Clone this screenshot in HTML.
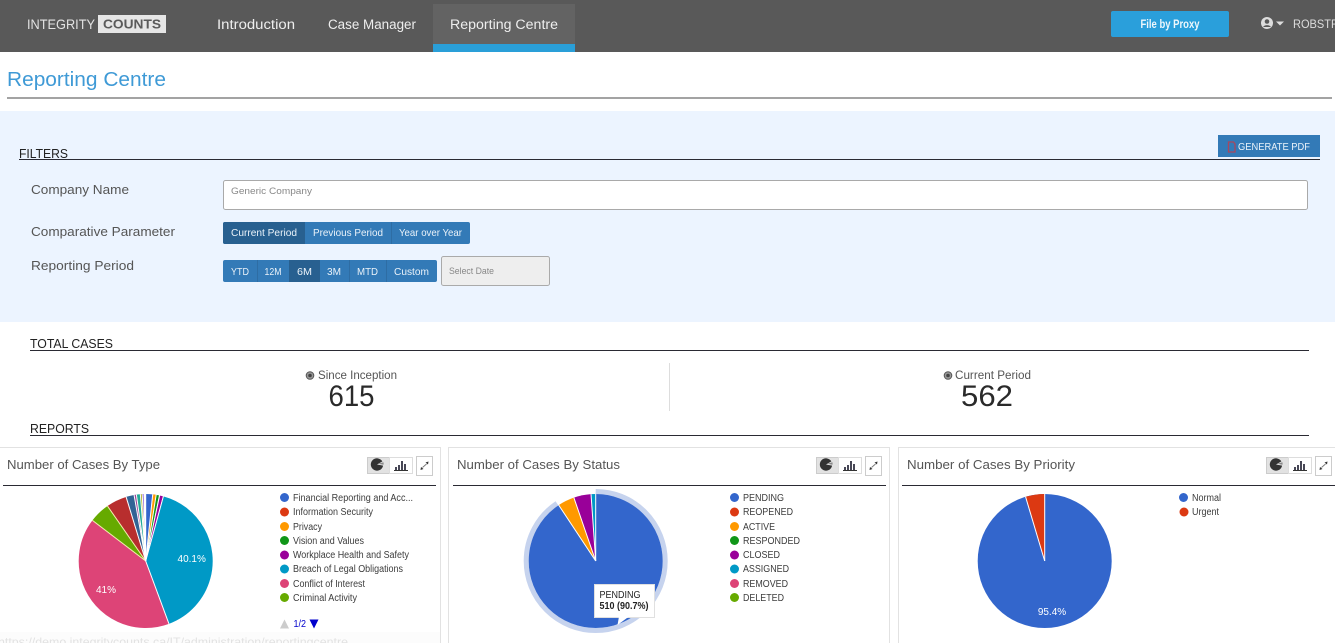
<!DOCTYPE html>
<html lang="en"><head><meta charset="utf-8"><title>Reporting Centre</title>
<style>
html,body{margin:0;padding:0;background:#fff;width:1335px;height:643px;overflow:hidden}
svg{display:block}
text{font-family:"Liberation Sans",Arial,sans-serif;white-space:pre}
.lg{font-size:10px;fill:#3c3c3c}
.ct{font-size:13px;fill:#555}
.sec{font-size:12.5px;fill:#222}
.lab{font-size:12.5px;fill:#555}
.btn{font-size:10.5px;fill:#eaf2f9}
.nav{font-size:13.5px;fill:#eee}
.pl{font-size:10px;fill:#fff;text-anchor:middle}
</style></head><body>
<svg xmlns="http://www.w3.org/2000/svg" width="1335" height="643" viewBox="0 0 1335 643">
<defs>
<g id="tools">
  <rect x=".5" y=".5" width="22" height="16" fill="#e2e2e2" stroke="#ccc"/>
  <rect x="22.5" y=".5" width="23" height="16" fill="#fff" stroke="#ddd"/>
  <rect x="49.5" y="-.5" width="16" height="19" fill="#fff" stroke="#ccc"/>
  <path d="M10 7.500L16.100 8.580A6.200 6.200 0 1 1 15.370 4.400Z" fill="#333"/>
  <path d="M11.500 6.800L16.400 5.200A5.500 5.500 0 0 1 16.500 7.800Z" fill="#888"/>
  <path d="M27 13.500H41" stroke="#333" stroke-width="1"/>
  <path d="M29 13V10M32 13V8M35 13V4M38 13V7" stroke="#334" stroke-width="1.800"/>
  <path d="M55.500 10.500L59.500 7" stroke="#777" stroke-width=".9"/>
  <path d="M53.500 13L54 10L56.500 12ZM61.500 4.500L61 7.500L58.500 5.500Z" fill="#333"/>
</g>
</defs>

<!-- top bar -->
<rect width="1335" height="52" fill="#595959"/>
<rect x="433" y="4" width="142" height="40" fill="#636363"/>
<rect x="433" y="44" width="142" height="8" fill="#2a9fd8"/>
<text x="27" y="29" font-size="14" fill="#e2e2e2" textLength="68" lengthAdjust="spacingAndGlyphs">INTEGRITY</text>
<rect x="98" y="15" width="68" height="18" fill="#e6e6e6"/>
<text x="103" y="28.500" font-size="12.500" font-weight="700" fill="#5a5a5a" textLength="58" lengthAdjust="spacingAndGlyphs">COUNTS</text>
<text class="nav" x="217" y="29" textLength="78" lengthAdjust="spacingAndGlyphs">Introduction</text>
<text class="nav" x="328" y="29" textLength="88" lengthAdjust="spacingAndGlyphs">Case Manager</text>
<text class="nav" x="450" y="29" textLength="108" lengthAdjust="spacingAndGlyphs">Reporting Centre</text>
<rect x="1111" y="11" width="118" height="26" rx="2" fill="#2a9fdb"/>
<text x="1140.500" y="28" font-size="11.500" font-weight="700" fill="#eef7fc" textLength="59" lengthAdjust="spacingAndGlyphs">File by Proxy</text>
<circle cx="1267" cy="23" r="6" fill="#ddd"/>
<circle cx="1267" cy="21.500" r="2.300" fill="#595959"/>
<path d="M1263 27a4.500 3.500 0 0 1 8 0Z" fill="#595959"/>
<path d="M1276 21.500h8l-4 4Z" fill="#ddd"/>
<text x="1293" y="28" font-size="11.500" fill="#ddd" textLength="46" lengthAdjust="spacingAndGlyphs">ROBSTR</text>

<!-- title -->
<text x="7" y="86" font-size="20" fill="#3f9ad6" textLength="159" lengthAdjust="spacingAndGlyphs">Reporting Centre</text>
<rect x="7" y="97" width="1325" height="2" fill="#a3a3a3"/>

<!-- filter panel -->
<rect y="111" width="1335" height="211" fill="#ecf4ff"/>
<text class="sec" x="19" y="158" textLength="49" lengthAdjust="spacingAndGlyphs">FILTERS</text>
<rect x="19" y="159" width="1301" height="1" fill="#2a2a33"/>
<rect x="1218" y="135" width="102" height="22" fill="#337ab7"/>
<path d="M1228.500 142h5l1.500 2v8h-6.500Z" fill="none" stroke="#a8475f" stroke-width="1.300"/>
<text x="1238" y="150" font-size="10.500" fill="#e9f2fa" textLength="72" lengthAdjust="spacingAndGlyphs">GENERATE PDF</text>

<text class="lab" x="31" y="194" textLength="98" lengthAdjust="spacingAndGlyphs">Company Name</text>
<text class="lab" x="31" y="236" textLength="144" lengthAdjust="spacingAndGlyphs">Comparative Parameter</text>
<text class="lab" x="31" y="270" textLength="103" lengthAdjust="spacingAndGlyphs">Reporting Period</text>

<rect x="223.500" y="180.500" width="1084" height="29" rx="2" fill="#fff" stroke="#a9a9a9"/>
<text x="231" y="194" font-size="9.500" fill="#888" textLength="81" lengthAdjust="spacingAndGlyphs">Generic Company</text>

<rect x="223" y="222" width="247" height="22" rx="2" fill="#337ab7"/>
<path d="M225 222h80v22h-80a2 2 0 0 1-2-2v-18a2 2 0 0 1 2-2Z" fill="#286090"/>
<rect x="391" y="222" width="1" height="22" fill="#2e6da4"/>
<text class="btn" x="231" y="236" textLength="66" lengthAdjust="spacingAndGlyphs">Current Period</text>
<text class="btn" x="313" y="236" textLength="70" lengthAdjust="spacingAndGlyphs">Previous Period</text>
<text class="btn" x="399" y="236" textLength="63" lengthAdjust="spacingAndGlyphs">Year over Year</text>

<rect x="223" y="260" width="214" height="22" rx="2" fill="#337ab7"/>
<rect x="289" y="260" width="31" height="22" fill="#286090"/>
<rect x="257" y="260" width="1" height="22" fill="#2e6da4"/>
<rect x="349" y="260" width="1" height="22" fill="#2e6da4"/>
<rect x="386" y="260" width="1" height="22" fill="#2e6da4"/>
<text class="btn" x="231" y="275" textLength="18" lengthAdjust="spacingAndGlyphs">YTD</text>
<text class="btn" x="264.500" y="275" textLength="17" lengthAdjust="spacingAndGlyphs">12M</text>
<text class="btn" x="297" y="275" textLength="15" lengthAdjust="spacingAndGlyphs">6M</text>
<text class="btn" x="327" y="275" textLength="14" lengthAdjust="spacingAndGlyphs">3M</text>
<text class="btn" x="357" y="275" textLength="21" lengthAdjust="spacingAndGlyphs">MTD</text>
<text class="btn" x="394" y="275" textLength="35" lengthAdjust="spacingAndGlyphs">Custom</text>
<rect x="441.500" y="256.500" width="108" height="29" rx="2" fill="#eee" stroke="#aaa"/>
<text x="449" y="274" font-size="9" fill="#888" textLength="45" lengthAdjust="spacingAndGlyphs">Select Date</text>

<!-- totals -->
<text class="sec" x="30" y="348" textLength="83" lengthAdjust="spacingAndGlyphs">TOTAL CASES</text>
<rect x="30" y="350" width="1279" height="1" fill="#2a2a33"/>
<circle cx="310" cy="375.500" r="3.800" fill="#999" stroke="#555"/><circle cx="310" cy="375.500" r="1.800" fill="#444"/>
<text x="318" y="379" font-size="11.500" fill="#555" textLength="79" lengthAdjust="spacingAndGlyphs">Since Inception</text>
<text x="328.500" y="406" font-size="30" fill="#2a2a2a" textLength="46" lengthAdjust="spacingAndGlyphs">615</text>
<rect x="669" y="363" width="1" height="48" fill="#ddd"/>
<circle cx="948" cy="375.500" r="3.800" fill="#999" stroke="#555"/><circle cx="948" cy="375.500" r="1.800" fill="#444"/>
<text x="955" y="379" font-size="11.500" fill="#555" textLength="76" lengthAdjust="spacingAndGlyphs">Current Period</text>
<text x="961" y="406" font-size="30" fill="#2a2a2a" textLength="52" lengthAdjust="spacingAndGlyphs">562</text>
<text class="sec" x="30" y="433" textLength="59" lengthAdjust="spacingAndGlyphs">REPORTS</text>
<rect x="30" y="435" width="1279" height="1" fill="#2a2a33"/>

<!-- cards -->
<g fill="#fff" stroke="#e2e2e2">
  <rect x="-2.500" y="447.500" width="443" height="210"/>
  <rect x="448.500" y="447.500" width="441" height="210"/>
  <rect x="898.500" y="447.500" width="441" height="210"/>
</g>
<text class="ct" x="7" y="469" textLength="153" lengthAdjust="spacingAndGlyphs">Number of Cases By Type</text>
<text class="ct" x="457" y="469" textLength="163" lengthAdjust="spacingAndGlyphs">Number of Cases By Status</text>
<text class="ct" x="907" y="469" textLength="168" lengthAdjust="spacingAndGlyphs">Number of Cases By Priority</text>
<rect x="3" y="485" width="433" height="1" fill="#2a2a33"/>
<rect x="453" y="485" width="433" height="1" fill="#2a2a33"/>
<rect x="902" y="485" width="433" height="1" fill="#2a2a33"/>
<use href="#tools" x="367" y="457"/>
<use href="#tools" x="816" y="457"/>
<use href="#tools" x="1266" y="457"/>

<!-- pie 1 -->
<g transform="translate(145.700 561)" fill="none" stroke-width="67">
  <circle r="33.500" pathLength="360" stroke="#3366cc" stroke-dasharray="6 360" transform="rotate(-90)"/>
  <circle r="33.500" pathLength="360" stroke="#dc3912" stroke-dasharray=".5 360" transform="rotate(-84)"/>
  <circle r="33.500" pathLength="360" stroke="#ff9900" stroke-dasharray="2.500 360" transform="rotate(-83.500)"/>
  <circle r="33.500" pathLength="360" stroke="#109618" stroke-dasharray="2.500 360" transform="rotate(-81)"/>
  <circle r="33.500" pathLength="360" stroke="#990099" stroke-dasharray="3 360" transform="rotate(-78)"/>
  <circle r="33.500" pathLength="360" stroke="#0099c6" stroke-dasharray="144.400 360" transform="rotate(-74.700)"/>
  <circle r="33.500" pathLength="360" stroke="#dd4477" stroke-dasharray="147.600 360" transform="rotate(69.700)"/>
  <circle r="33.500" pathLength="360" stroke="#66aa00" stroke-dasharray="18 360" transform="rotate(217.300)"/>
  <circle r="33.500" pathLength="360" stroke="#b82e2e" stroke-dasharray="17.800 360" transform="rotate(235.200)"/>
  <circle r="33.500" pathLength="360" stroke="#316395" stroke-dasharray="7 360" transform="rotate(253)"/>
  <circle r="33.500" pathLength="360" stroke="#994499" stroke-dasharray="2 360" transform="rotate(260)"/>
  <circle r="33.500" pathLength="360" stroke="#22aa99" stroke-dasharray="3.400 360" transform="rotate(262)"/>
  <circle r="33.500" pathLength="360" stroke="#aaaa11" stroke-dasharray="1.600 360" transform="rotate(265.400)"/>
  <circle r="33.500" pathLength="360" stroke="#6633cc" stroke-dasharray="1.500 360" transform="rotate(267)"/>
  <g stroke="#fff" stroke-width="1">
    <path d="M0 0V-67"/><path d="M0 0V-67" transform="rotate(6)"/><path d="M0 0V-67" transform="rotate(9)"/><path d="M0 0V-67" transform="rotate(12)"/>
    <path d="M0 0V-67" transform="rotate(15.300)"/><path d="M0 0V-67" transform="rotate(159.700)"/><path d="M0 0V-67" transform="rotate(307.300)" stroke="#f3efb0"/>
    <path d="M0 0V-67" transform="rotate(325.200)" stroke="#f3efb0"/><path d="M0 0V-67" transform="rotate(343)"/><path d="M0 0V-67" transform="rotate(350)"/>
    <path d="M0 0V-67" transform="rotate(352)"/><path d="M0 0V-67" transform="rotate(355.400)"/><path d="M0 0V-67" transform="rotate(357)"/><path d="M0 0V-67" transform="rotate(358.500)"/>
  </g>
</g>
<text class="pl" x="191.700" y="562">40.1%</text>
<text class="pl" x="106" y="593">41%</text>

<!-- legend 1 -->
<g>
  <circle cx="284.500" cy="497.500" r="4.500" fill="#3366cc"/><text class="lg" x="293" y="501" textLength="120" lengthAdjust="spacingAndGlyphs">Financial Reporting and Acc...</text>
  <circle cx="284.500" cy="512" r="4.500" fill="#dc3912"/><text class="lg" x="293" y="515" textLength="80" lengthAdjust="spacingAndGlyphs">Information Security</text>
  <circle cx="284.500" cy="526.500" r="4.500" fill="#ff9900"/><text class="lg" x="293" y="530" textLength="29" lengthAdjust="spacingAndGlyphs">Privacy</text>
  <circle cx="284.500" cy="540.500" r="4.500" fill="#109618"/><text class="lg" x="293" y="544" textLength="71" lengthAdjust="spacingAndGlyphs">Vision and Values</text>
  <circle cx="284.500" cy="555" r="4.500" fill="#990099"/><text class="lg" x="293" y="558" textLength="116" lengthAdjust="spacingAndGlyphs">Workplace Health and Safety</text>
  <circle cx="284.500" cy="569" r="4.500" fill="#0099c6"/><text class="lg" x="293" y="572" textLength="110" lengthAdjust="spacingAndGlyphs">Breach of Legal Obligations</text>
  <circle cx="284.500" cy="583.500" r="4.500" fill="#dd4477"/><text class="lg" x="293" y="587" textLength="72" lengthAdjust="spacingAndGlyphs">Conflict of Interest</text>
  <circle cx="284.500" cy="597.500" r="4.500" fill="#66aa00"/><text class="lg" x="293" y="601" textLength="64" lengthAdjust="spacingAndGlyphs">Criminal Activity</text>
</g>
<path d="M280 628.500l4.500-9 4.500 9Z" fill="#ccc"/>
<text x="293.500" y="627" font-size="10" fill="#0000cc" textLength="12.500" lengthAdjust="spacingAndGlyphs">1/2</text>
<path d="M309.500 619.500h9l-4.500 9Z" fill="#0000cc"/>

<!-- status bar ghost -->
<rect x="0" y="632" width="440" height="11" fill="#fcfcfc"/>
<text x="-2" y="646" font-size="12" fill="#e2e2e2" textLength="350" lengthAdjust="spacingAndGlyphs">https://demo.integritycounts.ca/IT/administration/reportingcentre</text>

<!-- pie 2 -->
<g transform="translate(595.700 561)" fill="none">
  <circle r="69.500" stroke-width="5" pathLength="360" stroke="#c6d3ee" stroke-dasharray="326.500 360" transform="rotate(-90)"/>
  <g stroke-width="67">
    <circle r="33.500" pathLength="360" stroke="#3366cc" stroke-dasharray="326.500 360" transform="rotate(-90)"/>
    <circle r="33.500" pathLength="360" stroke="#ff9900" stroke-dasharray="14.500 360" transform="rotate(236.500)"/>
    <circle r="33.500" pathLength="360" stroke="#990099" stroke-dasharray="15 360" transform="rotate(251)"/>
    <circle r="33.500" pathLength="360" stroke="#0099c6" stroke-dasharray="4 360" transform="rotate(266)"/>
  </g>
  <g stroke="#fff" stroke-width="1">
    <path d="M0 0V-67"/><path d="M0 0V-67" transform="rotate(326.500)"/><path d="M0 0V-67" transform="rotate(341)"/><path d="M0 0V-67" transform="rotate(356)"/>
  </g>
</g>
<rect x="594.500" y="584.500" width="60" height="33" fill="#fff" stroke="#e0e0e0"/>
<path d="M619 616.500L617.500 625L629 616.500Z" fill="#fff"/>
<text x="599.500" y="598" font-size="10" fill="#222" textLength="41" lengthAdjust="spacingAndGlyphs">PENDING</text>
<text x="599.500" y="609" font-size="10" font-weight="700" fill="#222" textLength="49" lengthAdjust="spacingAndGlyphs">510 (90.7%)</text>
<g>
  <circle cx="734.500" cy="497.500" r="4.500" fill="#3366cc"/><text class="lg" x="743" y="501" textLength="41" lengthAdjust="spacingAndGlyphs">PENDING</text>
  <circle cx="734.500" cy="512" r="4.500" fill="#dc3912"/><text class="lg" x="743" y="515" textLength="50" lengthAdjust="spacingAndGlyphs">REOPENED</text>
  <circle cx="734.500" cy="526.500" r="4.500" fill="#ff9900"/><text class="lg" x="743" y="530" textLength="32" lengthAdjust="spacingAndGlyphs">ACTIVE</text>
  <circle cx="734.500" cy="540.500" r="4.500" fill="#109618"/><text class="lg" x="743" y="544" textLength="57" lengthAdjust="spacingAndGlyphs">RESPONDED</text>
  <circle cx="734.500" cy="555" r="4.500" fill="#990099"/><text class="lg" x="743" y="558" textLength="37" lengthAdjust="spacingAndGlyphs">CLOSED</text>
  <circle cx="734.500" cy="569" r="4.500" fill="#0099c6"/><text class="lg" x="743" y="572" textLength="46" lengthAdjust="spacingAndGlyphs">ASSIGNED</text>
  <circle cx="734.500" cy="583.500" r="4.500" fill="#dd4477"/><text class="lg" x="743" y="587" textLength="45" lengthAdjust="spacingAndGlyphs">REMOVED</text>
  <circle cx="734.500" cy="597.500" r="4.500" fill="#66aa00"/><text class="lg" x="743" y="601" textLength="41" lengthAdjust="spacingAndGlyphs">DELETED</text>
</g>

<!-- pie 3 -->
<g transform="translate(1044.700 561)" fill="none">
  <circle r="67" fill="#3366cc"/>
  <circle r="33.500" stroke-width="67" pathLength="360" stroke="#dc3912" stroke-dasharray="16.600 360" transform="rotate(253.400)"/>
  <g stroke="#fff" stroke-width="1"><path d="M0 0V-67"/><path d="M0 0V-67" transform="rotate(343.400)"/></g>
</g>
<text class="pl" x="1052" y="615">95.4%</text>
<circle cx="1183.500" cy="497.500" r="4.500" fill="#3366cc"/><text class="lg" x="1192" y="501" textLength="29" lengthAdjust="spacingAndGlyphs">Normal</text>
<circle cx="1184" cy="512" r="4.500" fill="#dc3912"/><text class="lg" x="1192" y="515" textLength="27" lengthAdjust="spacingAndGlyphs">Urgent</text>
</svg>
</body></html>
